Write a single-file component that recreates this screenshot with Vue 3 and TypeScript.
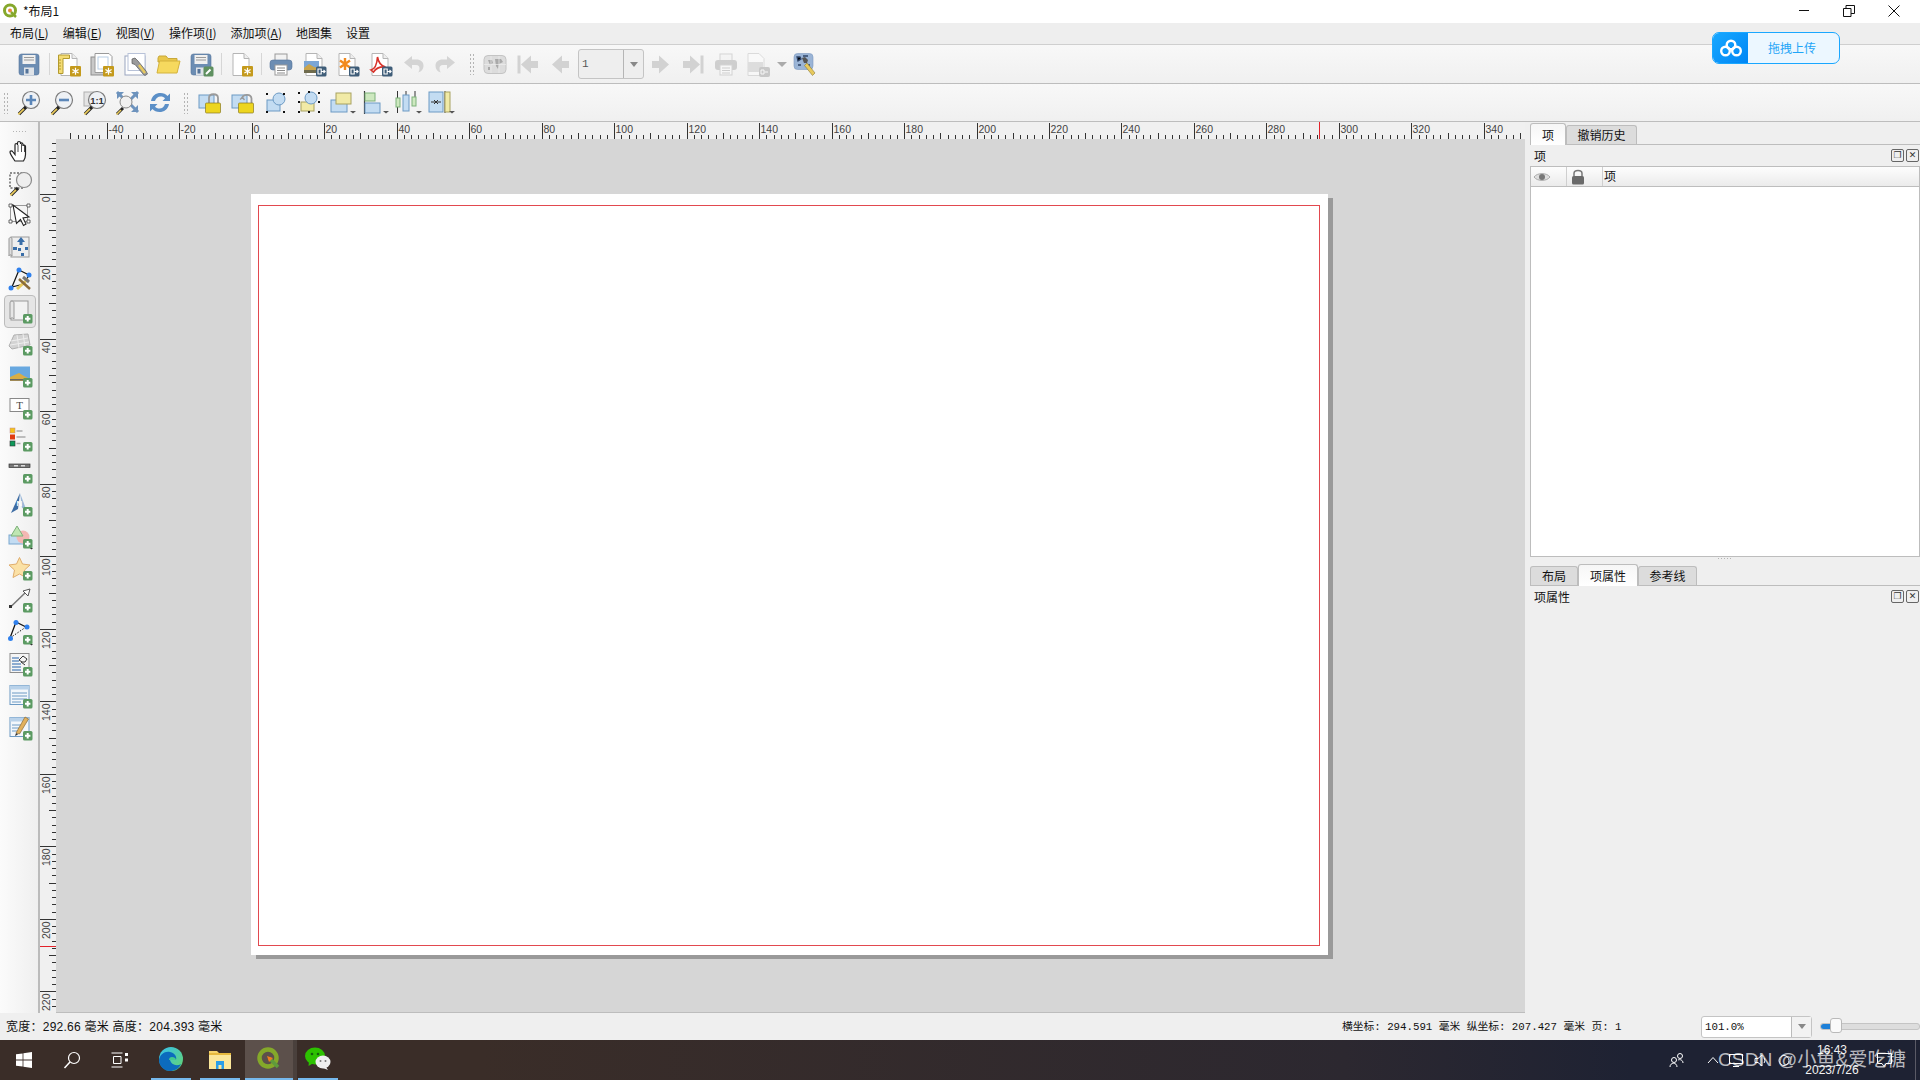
<script setup lang="ts">
type Item = { t: 'i' | 'sep' | 'handle' | 'combo' | 'drop' | 'spacer'; svg?: string; dis?: boolean; on?: boolean };

const plus = `<rect x="15" y="15" width="9.5" height="9.5" rx="1.5" fill="#5b9a62"/><path d="M19.7 17v5.4M17 19.7h5.4" stroke="#fff" stroke-width="2"/>`;
const star = `<rect x="13" y="14" width="11" height="10.5" rx="1" fill="#c49a1c"/><path d="M18.5 15.8v7M15.4 17.5l6.2 3.6M15.4 21.1l6.2-3.6" stroke="#fff" stroke-width="1.2"/>`;
const exp = `<rect x="14" y="14.5" width="10.5" height="10" rx="1.5" fill="#3f5d78"/><path d="M16 17h3.2v5H16zM19.5 19.5h3.5M21.5 18l1.6 1.5-1.6 1.5" fill="none" stroke="#fff" stroke-width="1.1"/>`;
const page = `<path d="M4 1.5h11l5 5v17H4z" fill="#fff" stroke="#b5b5b5"/><path d="M15 1.5v5h5" fill="#eee" stroke="#b5b5b5"/>`;
const lens = `<path d="M3 24l7-7" stroke="#222" stroke-width="3.2"/><path d="M2.4 24.4l5.6-5.6" stroke="#e8c95c" stroke-width="1.8"/>`;

const save = `<rect x="2" y="2" width="20" height="21" rx="2.5" fill="#6c8db3" stroke="#55749a" stroke-width=".6"/><rect x="5.5" y="3" width="13" height="9" fill="#f0f0f0"/><path d="M7 5.5h10M7 8h10" stroke="#9a9a9a"/><rect x="7" y="15.5" width="10" height="7.5" fill="#dfe3e8"/><rect x="8.5" y="17" width="3" height="4.5" fill="#55749a"/>`;
const I = {
  save,
  newLayout: `${page}<path d="M1.5 3h11v3.5H6v15H1.5z" fill="#f4dc74" stroke="#b39a2e"/><path d="M2 8h2M2 11h2M2 14h2M2 17h2" stroke="#b39a2e"/>${star}`,
  dup: `<rect x="1" y="5" width="17" height="18" fill="#c9c9c9" stroke="#8e8e8e"/><path d="M5 1.5h14l3 3v16H5z" fill="#fff" stroke="#9a9a9a"/><rect x="8" y="5" width="10" height="12" fill="#fff" stroke="#b8cde4"/>${star}`,
  mgr: `<rect x="2" y="4" width="20" height="19" fill="#fff" stroke="#9aa5bf"/><rect x="5" y="1.5" width="17" height="17" fill="#fff" stroke="#b8c2d8"/><path d="M9 7l3-1 3 3 8 10 1.5 3-2.5 1.5-2-1.5-8-9.5-3-1z" fill="#9b9b9b" stroke="#555" stroke-width=".7"/><path d="M16 13l6 8" stroke="#e8c95c" stroke-width="2.4"/>`,
  open: `<path d="M2 6l1-2h7l2 2.5h9V10H2z" fill="#e9c74a" stroke="#c8a83a"/><path d="M1 21l2.5-12H24l-3 12z" fill="#f6d95e" stroke="#d3b23c"/>`,
  saveAs: `${save}<rect x="14.5" y="14.5" width="10" height="10" rx="1.5" fill="#5f9060"/><path d="M17 22l4.5-4.5" stroke="#fff" stroke-width="2"/>`,
  newPage: `${page}${star}`,
  print: `<rect x="6" y="2" width="12" height="7" fill="#f2f2f2" stroke="#999"/><rect x="1" y="8" width="22" height="10" rx="3" fill="#6c8db3" stroke="#55749a" stroke-width=".6"/><rect x="6" y="13" width="12" height="10" fill="#fff" stroke="#999"/><path d="M8 16h8M8 18.5h8M8 21h8" stroke="#8b8b8b"/>`,
  img: `${page}<rect x="2" y="9" width="15" height="11" fill="#7ba6d6"/><path d="M2 16l5-4 5 3 5 1v4H2z" fill="#c9a44c"/><path d="M2 18h15v3H2z" fill="#6f6b4d"/>${exp}`,
  svg: `${page}<path d="M10 6v12M5 8.5l10 7M5 15.5l10-7" stroke="#f28a1e" stroke-width="2.4"/>${exp}`,
  pdf: `${page}<path d="M3 18c4-1 6-6 6.5-13 1 6 4 9 8 10-5-.5-9 .5-12 5z" fill="none" stroke="#d8322a" stroke-width="1.6"/>${exp}`,
  undo: `<path d="M11 4L3 10.5 11 17v-4h4c2.5 0 3.5 1.500 3.500 3.500 0 1.500-.5 3-1.500 4 4-1 5.500-4 5.500-7 0-3.500-3-6-7-6H11z" fill="#d4d4d4"/>`,
  redo: `<path d="M13 4l8 6.500-8 6.500v-4H9c-2.500 0-3.500 1.500-3.500 3.500 0 1.500.5 3 1.500 4-4-1-5.500-4-5.500-7 0-3.500 3-6 7-6h4.500z" fill="#d4d4d4"/>`,
  atlas: `<rect x="1" y="3.500" width="22" height="18" rx="4" fill="#dcdcdc" stroke="#c4c4c4"/><path d="M5 8h4l1 3-3 2zM12 7h6l2 3-4 2-1 5-2-3zM5 15h2v3H5z" fill="#a9a9a9"/><path d="M1 12.500h22M8 4v17M16 4v17" stroke="#eee" stroke-width=".7"/>`,
  first: `<path d="M3 3.500v18" stroke="#d2d2d2" stroke-width="3"/><path d="M5 12.500L15 3.500v5.500h7v7h-7v5.500z" fill="#d2d2d2"/>`,
  prev: `<path d="M3 12.500L13 3.500v5.500h7v7h-7v5.500z" fill="#d2d2d2"/>`,
  next: `<path d="M21 12.500L11 3.500v5.500H4v7h7v5.500z" fill="#d2d2d2"/>`,
  last: `<path d="M21 3.500v18" stroke="#d2d2d2" stroke-width="3"/><path d="M19 12.500L9 3.500v5.500H2v7h7v5.500z" fill="#d2d2d2"/>`,
  printD: `<g opacity=".35"><rect x="6" y="2" width="12" height="7" fill="#f2f2f2" stroke="#999"/><rect x="1" y="8" width="22" height="10" rx="3" fill="#8a8a8a"/><rect x="6" y="13" width="12" height="10" fill="#fff" stroke="#999"/><path d="M8 16h8M8 18.500h8M8 21h8" stroke="#8b8b8b"/></g>`,
  expD: `<g opacity=".4" transform="translate(-1 0)"><path d="M2 1.500h11l5 5v17H2z" fill="#fff" stroke="#b5b5b5"/><rect x="2" y="10" width="15" height="10" fill="#bdbdbd"/><rect x="13" y="15" width="11" height="10" rx="2" fill="#8a8a8a"/><path d="M15 18h3v4h-3zM18.500 20h3.500" fill="none" stroke="#fff"/></g>`,
  atlasSet: `<rect x="1" y="1.500" width="19" height="16" rx="3.500" fill="#9ab4d6" stroke="#7c98c0" stroke-width=".6"/><path d="M4 5h3l1 2-3 2zM10 4h5M5 13h3M14 13h3" stroke="#2f4468" stroke-width="1.300"/><path d="M9 6l3-1 3 3-1 3-3 0z" fill="#555"/><path d="M14 11l8 10-2.500 2.500-8-10z" fill="#e8c95c" stroke="#8a7a3a" stroke-width=".6"/>`,

  zoomIn: `<circle cx="15" cy="10" r="8.500" fill="#eef1f5" stroke="#7c7c7c" stroke-width="1.200"/><path d="M15 5v10M10 10h10" stroke="#5b86b8" stroke-width="2.600"/>${lens}`,
  zoomOut: `<circle cx="15" cy="10" r="8.500" fill="#eef1f5" stroke="#7c7c7c" stroke-width="1.200"/><path d="M10 10h10" stroke="#5b86b8" stroke-width="2.600"/>${lens}`,
  zoom1: `<rect x="2" y="2" width="14" height="14" fill="#e4e4e4" stroke="#b0b0b0"/><circle cx="15" cy="10" r="8.500" fill="#eef1f5" stroke="#7c7c7c" stroke-width="1.200"/><text x="15" y="13.500" text-anchor="middle" font-size="9.500" font-weight="700" font-family="Liberation Sans" fill="#333">1:1</text>${lens}`,
  zoomFull: `<path d="M2 2h7L2 9zM23 2h-7l7 7zM23 22h-7l7-7z" fill="#6d93bd"/><path d="M2 2l8 8M23 2l-8 8M23 22l-8-8" stroke="#6d93bd" stroke-width="3"/><circle cx="11" cy="12" r="6" fill="#f0f0f0" stroke="#8a8a8a"/><path d="M2 24l6-6" stroke="#222" stroke-width="3"/><path d="M1.500 24.500l4.500-4.500" stroke="#e8c95c" stroke-width="1.600"/>`,
  refresh: `<path d="M3 11C4 5.500 8 3 12.500 3c3 0 5.500 1 7 3L22 3.500V11h-7.500l2.500-2.500C16 7 14.500 6.500 12.500 6.500 10 6.500 8 8 7 11z" fill="#5b8fc7"/><path d="M21 14c-1 5.500-5 8-9.500 8-3 0-5.500-1-7-3L2 21.500V14h7.500L7 16.500C8 18 9.500 18.500 11.500 18.500c2.500 0 4.500-1.500 5.500-4.500z" fill="#5b8fc7"/>`,
  lock: `<rect x="1" y="5" width="15" height="13" fill="#c3dcf2" stroke="#6c9ac4"/><path d="M11 13V8c0-5 9-5 9 0v5" fill="none" stroke="#9a9a9a" stroke-width="1.800"/><rect x="7.500" y="13" width="15" height="10" rx="1" fill="#edd51f" stroke="#8a7a20" stroke-width=".7"/>`,
  unlock: `<rect x="1" y="5" width="15" height="13" fill="#c3dcf2" stroke="#6c9ac4"/><path d="M11 9c0-5 9-6 9.500-.5V13" fill="none" stroke="#9a9a9a" stroke-width="1.800"/><path d="M9 9.500l2.500-2 2 2.500" fill="none" stroke="#9a9a9a" stroke-width="1.300"/><rect x="7.500" y="13" width="15" height="10" rx="1" fill="#edd51f" stroke="#8a7a20" stroke-width=".7"/>`,
  group: `<rect x="3" y="10" width="13" height="11" fill="#c3dcf2" stroke="#6c9ac4"/><circle cx="15" cy="9" r="6" fill="#c3dcf2" stroke="#6c9ac4"/><path d="M2 3h2v2H2zM19 3h2v2h-2zM2 21h2v2H2zM19 21h2v2h-2z" fill="#111"/>`,
  ungroup: `<rect x="4" y="12" width="13" height="9" fill="#f1eaa6" stroke="#a8a260"/><circle cx="14" cy="8" r="6" fill="#c3dcf2" stroke="#6c9ac4"/><path d="M1 2h2v2H1zM11 1h2v2h-2zM21 2h2v2h-2zM1 11h2v2H1zM21 11h2v2h-2zM1 21h2v2H1zM11 21h2v2h-2zM21 21h2v2h-2z" fill="#111"/>`,
  raise: `<rect x="1" y="10" width="16" height="12" fill="#c3dcf2" stroke="#6c9ac4"/><rect x="6" y="3" width="15" height="11" fill="#f1eaa6" stroke="#a8a260"/><path d="M21 24h6l-3 2.500z" fill="#555" transform="translate(-1 -3)"/>`,
  align: `<path d="M1.500 1v23" stroke="#333" stroke-width="1.200"/><rect x="2" y="3" width="10" height="8" fill="#cde8bf" stroke="#7db17a"/><rect x="2" y="13" width="15" height="10" fill="#c3dcf2" stroke="#6c9ac4"/><path d="M21 24h6l-3 2.500z" fill="#555" transform="translate(-1 -3)"/>`,
  distrib: `<path d="M1.500 1v9M1.500 16v7M10 1v5M19 1v9" stroke="#333"/><rect x="0" y="8" width="4" height="9" fill="#cde8bf" stroke="#7db17a"/><rect x="7" y="5" width="6" height="16" fill="#c3dcf2" stroke="#6c9ac4"/><rect x="16" y="7" width="4" height="9" fill="#cde8bf" stroke="#7db17a"/><path d="M21 24h6l-3 2.500z" fill="#555" transform="translate(-1 -3)"/>`,
  resize: `<rect x="0" y="2" width="14" height="20" fill="#c3dcf2" stroke="#6c9ac4"/><path d="M2 12h4M12 12H8M5 10l2 2-2 2M9 10l-2 2 2 2" stroke="#333" fill="none"/><path d="M16 1v22" stroke="#333"/><rect x="16" y="2" width="5" height="20" fill="#f1eaa6" stroke="#a8a260"/><path d="M21 24h6l-3 2.500z" fill="#555" transform="translate(-1 -3)"/>`,

  hand: `<path d="M7 22c-2-3-5-7-5-9 0-1.500 2-1.500 3 0l2 2.500V6c0-2 2.500-2 2.500 0v-2c0-2 3-2 3 0V5c0-1.500 2.500-1.500 2.500.5V7c0-1.500 2.500-1 2.500 .5v8c0 3-1 5-2 6.500z" fill="#fff" stroke="#222" stroke-width="1.200"/><path d="M10 6v7M13.500 5v8M16.500 6v7" stroke="#222" stroke-width=".8"/>`,
  zoomTool: `<rect x="2" y="2" width="13" height="15" fill="none" stroke="#222" stroke-dasharray="2 1.500"/><circle cx="16" cy="9" r="7.500" fill="#eeeeee" stroke="#8a8a8a" stroke-width="1.200"/>${lens}`,
  select: `<rect x="2.500" y="2.500" width="17" height="16" fill="none" stroke="#999"/><path d="M1 1h3v3H1zM19 1h3v3h-3zM1 17h3v3H1zM19 17h3v3h-3z" fill="#fff" stroke="#444" stroke-width=".8"/><path d="M5 2l16 12-6 1 3 6-2.500 1.500-3-6-4 4z" fill="#fff" stroke="#222" stroke-width="1.100"/>`,
  moveC: `<rect x="3" y="2" width="18" height="20" fill="#eee" stroke="#999"/><path d="M1 4c0-2 3-2 3 0v17c-1-2-3-1-3 0z" fill="#ddd" stroke="#999"/><path d="M13 2l4 5h-2.500v3h-3V7H9z" fill="#3a6ea8"/><path d="M5 12h4v3H5zM10 13h3v3h-3zM17 12h3v3h-3zM13 18h3v3h-3z" fill="#3a6ea8"/>`,
  nodes: `<path d="M11 3L4 20l12-3L21 8z" fill="none" stroke="#111" stroke-width="1.200"/><circle cx="11" cy="3" r="2.500" fill="#2f80ed"/><circle cx="21" cy="8" r="2.500" fill="#2f80ed"/><circle cx="3" cy="21" r="2.500" fill="#2f80ed"/><path d="M9 22l11-10" stroke="#e8c95c" stroke-width="3"/><path d="M11 12l11 10" stroke="#8a6b3a" stroke-width="2.500"/><path d="M15 10l6 5" stroke="#777" stroke-width="3"/>`,
  map: `<rect x="3" y="2" width="17" height="19" fill="#f2f2f2" stroke="#999"/><path d="M2 4c0-2.500 4-2.500 4 0v16c-1-1.500-3-1.500-4 0z" fill="#e6e6e6" stroke="#999"/>${plus}`,
  d3: `<path d="M6 4l14-1 2 11-18 4-3-3z" fill="#d3d3d3" stroke="#b0b0b0"/><path d="M3 10l17-3M2 14l19-3M9 4l2 13M15 3l2 12" stroke="#eee"/>${plus}`,
  pic: `<g transform="translate(0 2)"><rect x="2" y="1.500" width="20" height="14" fill="#68a8e0"/><path d="M2 12l9-4 5 3 6 3v2H2z" fill="#d9ad46"/><rect x="2" y="14" width="20" height="1.500" fill="#666"/></g>${plus}`,
  label: `<g transform="translate(0 1.500)"><rect x="2" y="2" width="19" height="13" fill="#fff" stroke="#888"/><text x="11.500" y="12.500" text-anchor="middle" font-size="11" font-family="Liberation Serif" fill="#444">T</text></g>${plus}`,
  legend: `<rect x="2" y="1" width="5" height="5" fill="#f6c21c" stroke="#b88" stroke-width=".5"/><rect x="2" y="7.500" width="5" height="5" fill="#e03c12"/><rect x="2" y="14" width="5" height="5" fill="#0e9a5a" stroke="#333" stroke-width=".6"/><path d="M8.500 4h6M8.500 10h9M8.500 16.500h4" stroke="#aaa" stroke-width="1.400"/>${plus}`,
  scale: `<rect x="1" y="5" width="21" height="3.500" fill="#777" stroke="#333" stroke-width=".7"/><path d="M6 6.700h4M13 6.700h4" stroke="#ddd" stroke-width="1.500"/>${plus}`,
  north: `<path d="M12 1L3 21l7-4z" fill="#3e6da4"/><path d="M12 1l6 16-4-1z" fill="#9cb9d9"/><text x="11.500" y="14" text-anchor="middle" font-size="8" font-weight="700" font-family="Liberation Sans" fill="#fff">N</text>${plus}`,
  shape: `<rect x="1" y="11" width="15" height="9" fill="#c3dcf2" stroke="#7aa7cf"/><circle cx="15" cy="13" r="6.500" fill="#f3b7b3"/><path d="M9 2l6 10H3z" fill="#bfe6b2" stroke="#7db17a"/>${plus}<path d="M22 24h3l-1.500 1.500z" fill="#333"/>`,
  starI: `<path d="M11.500 1.500l3 6.500 7.500 1-5.500 5 1.500 7.500-6.500-3.500-6.500 3.500 1.500-7.500L1 9l7.500-1z" fill="#fbe1a6" stroke="#e0ad6c"/>${plus}`,
  arrow: `<path d="M2.500 19L17 5" stroke="#777" stroke-width="1.500"/><rect x="1" y="17" width="3" height="3" fill="#333"/><path d="M22 1l-2 7-5-5z" fill="#fff" stroke="#555"/>${plus}`,
  nodeAdd: `<path d="M8 2L2 18" stroke="#111" stroke-width="1.300"/><path d="M8 2l10 5" stroke="#111" stroke-width="1.300"/><path d="M2 18L18 7" stroke="#111" stroke-dasharray="1.500 1.500"/><circle cx="8" cy="2.500" r="2.500" fill="#2f80ed"/><circle cx="19" cy="7" r="2.500" fill="#2f80ed"/><circle cx="2.500" cy="18.500" r="2.500" fill="#2f80ed"/>${plus}<path d="M22 24h3l-1.500 1.500z" fill="#333"/>`,
  html: `<rect x="2" y="1.500" width="19" height="19" fill="#f5f5f5" stroke="#8c8c8c"/><path d="M4 6h7M4 9h7M4 12h9M4 15h9M4 18h9" stroke="#6c94c4" stroke-width="1.400"/><path d="M11 8l4-4 4 3-2 3h-3zM13 10l4 3" fill="none" stroke="#333"/>${plus}`,
  attr: `<rect x="2" y="1.500" width="19" height="19" fill="#f3f7fb" stroke="#6c9ac4"/><rect x="2" y="1.500" width="19" height="4" fill="#b9d2ea"/><path d="M4 9h15M4 12h15M4 15h15M4 18h9" stroke="#6c9ac4"/>${plus}`,
  fixed: `<rect x="2" y="1.500" width="19" height="19" fill="#f3f7fb" stroke="#6c9ac4"/><rect x="2" y="1.500" width="19" height="4" fill="#b9d2ea"/><path d="M4 9h9M4 12h9M4 15h9" stroke="#6c9ac4"/><path d="M8 17l9-16 3.500 2-9 15z" fill="#e2b15d" stroke="#8a6b3a" stroke-width=".7"/><path d="M8 17l-1 3 3-1.500z" fill="#333"/>${plus}`,
};

const bar1: Item[] = [
  { t: 'i', svg: I.save }, { t: 'sep' }, { t: 'i', svg: I.newLayout }, { t: 'i', svg: I.dup }, { t: 'i', svg: I.mgr },
  { t: 'i', svg: I.open }, { t: 'i', svg: I.saveAs }, { t: 'sep' }, { t: 'i', svg: I.newPage }, { t: 'sep' },
  { t: 'i', svg: I.print }, { t: 'i', svg: I.img }, { t: 'i', svg: I.svg }, { t: 'i', svg: I.pdf },
  { t: 'i', svg: I.undo }, { t: 'i', svg: I.redo }, { t: 'handle' },
  { t: 'i', svg: I.atlas }, { t: 'i', svg: I.first }, { t: 'i', svg: I.prev }, { t: 'combo' }, { t: 'i', svg: I.next },
  { t: 'i', svg: I.last }, { t: 'i', svg: I.printD }, { t: 'i', svg: I.expD }, { t: 'drop' }, { t: 'i', svg: I.atlasSet },
];
const bar2: Item[] = [
  { t: 'i', svg: I.zoomIn }, { t: 'i', svg: I.zoomOut }, { t: 'i', svg: I.zoom1 }, { t: 'i', svg: I.zoomFull }, { t: 'i', svg: I.refresh },
  { t: 'handle' },
  { t: 'i', svg: I.lock }, { t: 'i', svg: I.unlock }, { t: 'i', svg: I.group }, { t: 'i', svg: I.ungroup },
  { t: 'i', svg: I.raise }, { t: 'i', svg: I.align }, { t: 'i', svg: I.distrib }, { t: 'i', svg: I.resize },
];
const side: Item[] = [
  { t: 'i', svg: I.hand }, { t: 'i', svg: I.zoomTool }, { t: 'i', svg: I.select }, { t: 'i', svg: I.moveC }, { t: 'i', svg: I.nodes },
  { t: 'i', svg: I.map, on: true }, { t: 'i', svg: I.d3 }, { t: 'i', svg: I.pic }, { t: 'i', svg: I.label }, { t: 'i', svg: I.legend },
  { t: 'i', svg: I.scale }, { t: 'i', svg: I.north }, { t: 'i', svg: I.shape }, { t: 'i', svg: I.starI }, { t: 'i', svg: I.arrow },
  { t: 'i', svg: I.nodeAdd }, { t: 'i', svg: I.html }, { t: 'i', svg: I.attr }, { t: 'i', svg: I.fixed },
];

const menus = [
  { a: '布局(', k: 'L', b: ')' }, { a: '编辑(', k: 'E', b: ')' }, { a: '视图(', k: 'V', b: ')' },
  { a: '操作项(', k: 'I', b: ')' }, { a: '添加项(', k: 'A', b: ')' }, { a: '地图集', k: '', b: '' }, { a: '设置', k: '', b: '' },
];

const scale = 3.624;
const hx0 = 251.7 - 56;
const vy0 = 194 - 139;
const hw = 1525 - 56;
const vh = 1013 - 139;

function ticks(origin: number, size: number) {
  const out: { p: number; kind: number; label: string }[] = [];
  for (let mm = -50; mm <= 400; mm += 2) {
    const p = origin + mm * scale;
    if (p < 0 || p > size) continue;
    const kind = mm % 20 === 0 ? 2 : mm % 10 === 0 ? 1 : 0;
    out.push({ p: Math.round(p) + 0.5, kind, label: kind === 2 ? String(mm) : '' });
  }
  return out;
}
const hTicks = ticks(hx0, hw);
const vTicks = ticks(vy0, vh);
</script>

<template>
  <div class="app">
    <header class="title">
      <svg class="logo" viewBox="0 0 16 16">
        <circle cx="8" cy="7.500" r="5.500" fill="#fff" stroke="#86a82c" stroke-width="3" />
        <circle cx="8" cy="7.500" r="2" fill="#e88a3a" />
        <path d="M9 9l5 5" stroke="#86a82c" stroke-width="2.500" />
      </svg>
      <span>*布局1</span>
      <div class="winbtns">
        <svg width="12" height="12" viewBox="0 0 12 12"><path d="M1 5.500h10" stroke="#111" /></svg>
        <svg width="12" height="12" viewBox="0 0 12 12"><path d="M.5 3.500h7.500v8H.5zM3 3.500V.5h8.500v8H8" fill="none" stroke="#111" /></svg>
        <svg width="12" height="12" viewBox="0 0 12 12"><path d="M.5.5l11 11M11.500.5l-11 11" stroke="#111" /></svg>
      </div>
    </header>

    <nav class="menu">
      <span v-for="m in menus" :key="m.a" class="mi">{{ m.a }}<u v-if="m.k">{{ m.k }}</u>{{ m.b }}</span>
    </nav>

    <div class="tb first">
      <template v-for="(it, i) in bar1" :key="i">
        <span v-if="it.t === 'i'" class="tbtn"><svg class="ic" viewBox="0 0 25 25" v-html="it.svg"></svg></span>
        <span v-else-if="it.t === 'sep'" class="sep"></span>
        <span v-else-if="it.t === 'handle'" class="handle"></span>
        <span v-else-if="it.t === 'drop'" class="drop"></span>
        <span v-else class="combo"><span class="cv">1</span><span class="ca"><i></i></span></span>
      </template>
    </div>
    <div class="tb second">
      <span class="handle lead"></span>
      <template v-for="(it, i) in bar2" :key="i">
        <span v-if="it.t === 'i'" class="tbtn"><svg class="ic" viewBox="0 0 25 25" v-html="it.svg"></svg></span>
        <span v-else class="handle wide"></span>
      </template>
    </div>

    <main class="main">
      <aside class="side">
        <span class="hgrip"></span>
        <span v-for="(it, i) in side" :key="i" class="sbtn" :class="{ on: it.on }">
          <svg class="ic" viewBox="0 0 25 25" v-html="it.svg"></svg>
        </span>
      </aside>

      <section class="center">
        <div class="rtop">
          <div class="corner"></div>
          <svg class="hr" :width="hw" height="17">
            <g v-for="t in hTicks" :key="t.p">
              <line :x1="t.p" :x2="t.p" :y1="t.kind === 2 ? 1 : t.kind === 1 ? 11 : 13" y2="17" stroke="#333" />
              <text v-if="t.label" :x="t.p + 1" y="11" class="rl">{{ t.label }}</text>
            </g>
            <line x1="1263.500" x2="1263.500" y1="0" y2="17" stroke="#e3222a" />
          </svg>
        </div>
        <div class="rbody">
          <svg class="vr" width="16" :height="vh">
            <g v-for="t in vTicks" :key="t.p">
              <line :y1="t.p" :y2="t.p" :x1="t.kind === 2 ? 0 : t.kind === 1 ? 9 : 12" x2="16" stroke="#333" />
              <text v-if="t.label" x="0" y="0" class="rl" text-anchor="end" :transform="`translate(10 ${t.p + 2}) rotate(-90)`">{{ t.label }}</text>
            </g>
            <line x1="0" x2="16" y1="807.500" y2="807.500" stroke="#e3222a" />
          </svg>
          <div class="canvas">
            <div class="page"><div class="frame"></div></div>
          </div>
        </div>
      </section>

      <aside class="dock">
        <div class="tabs t1">
          <span class="tab on w36">项</span>
          <span class="tab w70">撤销历史</span>
        </div>
        <div class="dtitle"><span>项</span><span class="dbtns"><i class="db">❐</i><i class="db">✕</i></span></div>
        <div class="thead">
          <span class="th c1">
            <svg width="18" height="12" viewBox="0 0 18 12"><path d="M1 6c3-4.500 13-4.500 16 0-3 4.500-13 4.500-16 0z" fill="#ddd" stroke="#aaa" /><circle cx="9" cy="6" r="3" fill="#777" /></svg>
          </span>
          <span class="th c1 c2">
            <svg width="14" height="16" viewBox="0 0 14 16"><path d="M3 7V4.500c0-4 8-4 8 0V7" fill="none" stroke="#777" stroke-width="1.500" /><rect x="1" y="7" width="12" height="8.500" rx="1.500" fill="#6a6a6a" /></svg>
          </span>
          <span class="th c3">项</span>
        </div>
        <div class="list"></div>
        <div class="split"></div>
        <div class="tabs t2">
          <span class="tab w48">布局</span>
          <span class="tab on w60">项属性</span>
          <span class="tab w59">参考线</span>
        </div>
        <div class="dtitle"><span>项属性</span><span class="dbtns"><i class="db">❐</i><i class="db">✕</i></span></div>
      </aside>
    </main>

    <footer class="status">
      <span class="sleft">宽度：292.66 毫米 高度：204.393 毫米</span>
      <span class="sright">横坐标: 294.591 毫米 纵坐标: 207.427 毫米 页: 1</span>
      <span class="zoomc"><span class="zv">101.0%</span><span class="ca"><i></i></span></span>
      <span class="slider"><span class="fill"></span><span class="knob"></span></span>
    </footer>

    <div class="taskbar">
      <span class="tk">
        <svg width="16" height="16" viewBox="0 0 16 16"><path d="M0 2.300l6.600-.9v6.200H0zM7.400 1.300L16 0v7.600H7.400zM0 8.400h6.600v6.200L0 13.700zM7.400 8.400H16V16l-8.600-1.300z" fill="#fff" /></svg>
      </span>
      <span class="tk">
        <svg width="18" height="18" viewBox="0 0 18 18"><circle cx="11" cy="7" r="5.500" fill="none" stroke="#fff" stroke-width="1.200" /><path d="M7 11l-5.500 6" stroke="#fff" stroke-width="1.500" /></svg>
      </span>
      <span class="tk">
        <svg width="18" height="16" viewBox="0 0 18 16"><path d="M.5 1h11M.5 15h11M2.500 4.500h7.500v7H2.500z" fill="none" stroke="#fff" /><path d="M14 1h3v3h-3zM14 6.500h3v3h-3z" fill="#fff" /></svg>
      </span>
      <span class="app-ic edge">
        <svg width="26" height="26" viewBox="0 0 26 26">
          <defs><linearGradient id="eg" x1="0" x2="1" y1="0" y2="1"><stop offset="0" stop-color="#35c1f1" /><stop offset="1" stop-color="#66d56a" /></linearGradient></defs>
          <circle cx="13" cy="13" r="12" fill="url(#eg)" />
          <path d="M1 14c1-6 6-9 11-8 5 1 7 5 6 8h-6c1 4 6 7 11 4-2 5-7 7-11 7C6 25 1 20 1 14z" fill="#0c6bbd" />
          <path d="M11 14c0-2 1-3 3-3 2 0 4 1 4 3z" fill="#43c98e" />
        </svg>
      </span>
      <span class="app-ic files">
        <svg width="24" height="22" viewBox="0 0 24 22"><path d="M1 3h8l2 2h12v16H1z" fill="#f6d46b" /><rect x="1" y="5" width="22" height="16" fill="#fbe79a" /><path d="M1 5h22v2H1z" fill="#e6b93e" /><path d="M8 13h8v8h-2.500v-4h-3v4H8z" fill="#2b9fe8" /></svg>
      </span>
      <span class="app-ic qgis">
        <svg width="26" height="26" viewBox="0 0 26 26"><circle cx="12" cy="12" r="8.500" fill="none" stroke="#84a82a" stroke-width="4.500" /><path d="M13 12l9 9" stroke="#5f9a3c" stroke-width="3.500" /><path d="M11 10l6 2-4 4z" fill="#f07c1e" /></svg>
      </span>
      <span class="sliver"></span>
      <span class="app-ic wechat">
        <svg width="26" height="24" viewBox="0 0 26 24"><ellipse cx="10" cy="9" rx="10" ry="8.500" fill="#2dc100" /><path d="M4 14l-.5 5 5-3z" fill="#2dc100" /><circle cx="7" cy="7" r="1.300" fill="#14610a" /><circle cx="13" cy="7" r="1.300" fill="#14610a" /><ellipse cx="18" cy="15" rx="7.500" ry="6.500" fill="#eee" /><path d="M21 20l2 3-5-2z" fill="#eee" /><circle cx="15.500" cy="14" r="1" fill="#777" /><circle cx="20.500" cy="14" r="1" fill="#777" /></svg>
      </span>
      <span class="tray">
        <svg class="t-user" width="16" height="16" viewBox="0 0 16 16"><circle cx="11" cy="4" r="2.500" fill="none" stroke="#fff" /><circle cx="5" cy="8" r="2.500" fill="none" stroke="#fff" /><path d="M1 15c0-5 7-5 7 0M9 8c2-1 5 0 5 3" fill="none" stroke="#fff" /></svg>
        <svg class="t-caret" width="12" height="8" viewBox="0 0 12 8"><path d="M1 7l5-5.500L11 7" fill="none" stroke="#fff" /></svg>
        <svg class="t-net" width="14" height="13" viewBox="0 0 14 13"><rect x=".5" y=".5" width="13" height="9" fill="none" stroke="#fff" /><path d="M4 12.500h6" stroke="#fff" /></svg>
        <svg class="t-vol" width="14" height="13" viewBox="0 0 14 13"><path d="M1 4.500h3L8 1v11L4 8.500H1z" fill="none" stroke="#fff" /><path d="M10 4c1 1 1 4 0 5" fill="none" stroke="#fff" /></svg>
        <svg class="t-ime" width="12" height="13" viewBox="0 0 12 13"><circle cx="6" cy="6.500" r="5" fill="none" stroke="#fff" /></svg>
        <span class="clock"><span>16:43</span><span>2023/7/26</span></span>
        <svg class="t-note" width="15" height="14" viewBox="0 0 15 14"><path d="M.5.500h14v10H9l-2 3-2-3H.5z" fill="none" stroke="#fff" /></svg>
        <span class="showd"></span>
      </span>
      <span class="mark">CSDN @小鱼&amp;爱吃糖</span>
    </div>

    <div class="upload">
      <span class="ub">
        <svg width="22" height="18" viewBox="0 0 22 18"><circle cx="11" cy="6" r="4.300" fill="none" stroke="#fff" stroke-width="2.400" /><circle cx="5.500" cy="12" r="4.300" fill="none" stroke="#fff" stroke-width="2.400" /><circle cx="16.500" cy="12" r="4.300" fill="none" stroke="#fff" stroke-width="2.400" /></svg>
      </span>
      <span class="ut">拖拽上传</span>
    </div>
  </div>
</template>

<style scoped>
.app {
  position: relative;
  width: 1920px;
  height: 1080px;
  display: flex;
  flex-direction: column;
  overflow: hidden;
  background: #efefef;
  font-family: "Noto Sans CJK SC", "Liberation Sans", sans-serif;
  font-size: 12px;
  color: #111;
}
.title {
  height: 23px;
  box-sizing: border-box;
  padding-bottom: 2px;
  background: #fff;
  display: flex;
  align-items: center;
  font-size: 12px;
}
.logo { width: 16px; height: 16px; margin: 0 5px 0 2px; }
.winbtns { margin-left: auto; display: flex; gap: 33px; padding-right: 20px; align-items: center; }
.menu {
  height: 21px;
  box-sizing: border-box;
  padding: 0 0 2px 10px;
  background: #eee;
  display: flex;
  align-items: center;
  gap: 14px;
  font-size: 12px;
}
.mi { white-space: nowrap; line-height: 16px; }
.tb {
  display: flex;
  align-items: center;
  background: linear-gradient(#f8f8f8, #f0f0f0);
  border-top: 1px solid #cfcfcf;
}
.first { height: 38px; padding-left: 13px; }
.second { height: 37px; padding-left: 0; border-top: 1px solid #bdbdbd; }
.tbtn { width: 33px; height: 33px; display: flex; align-items: center; justify-content: center; flex: none; }
.ic { width: 25px; height: 25px; display: block; overflow: visible; }
.sep { width: 1px; height: 22px; background: #d6d6d6; margin: 0 3px; flex: none; }
.handle {
  width: 16px;
  height: 22px;
  flex: none;
  background-image: radial-gradient(circle, #b4b4b4 0.7px, transparent 0.8px);
  background-size: 3px 4px;
  background-repeat: repeat;
  background-clip: content-box;
  padding: 0 5px;
  box-sizing: border-box;
}
.wide { width: 17px; padding: 0 5px 0 6px; }
.lead { width: 12px; padding: 0 4px 0 2px; }
.combo {
  width: 66px;
  height: 30px;
  flex: none;
  box-sizing: border-box;
  border: 1px solid #c4c4c4;
  border-radius: 3px;
  display: flex;
  background: #eee;
}
.cv { flex: 1; border-right: 1px solid #b5b5b5; padding-left: 3px; line-height: 28px; color: #555; font-family: "Liberation Mono", monospace; font-size: 11px; }
.ca { width: 19px; display: flex; align-items: center; justify-content: center; }
.ca i { border: 4px solid transparent; border-top: 5px solid #888; margin-top: 4px; }
.drop { width: 10px; height: 9px; flex: none; margin: 5px 2px 0 1px; border: 5px solid transparent; border-top: 5px solid #aaa; border-bottom: none; box-sizing: border-box; }
.main { flex: 1; display: flex; min-height: 0; border-top: 1px solid #bdbdbd; }
.side {
  border-right: 2px solid #bbb;
  background: linear-gradient(90deg, #fbfbfb, #efefef);
  display: flex;
  flex-direction: column;
  align-items: center;
  padding: 8px 0 0 2px;
  flex: none;
  box-sizing: border-box;
  width: 40px;
}
.hgrip { width: 16px; height: 3px; margin-bottom: 2px; background-image: radial-gradient(circle, #b4b4b4 0.7px, transparent 0.8px); background-size: 3px 3px; }
.sbtn { width: 32px; height: 32.1px; display: flex; align-items: center; justify-content: center; flex: none; box-sizing: border-box; }
.sbtn.on { background: #e5e5e5; border: 1px solid #bcbcbc; border-radius: 4px; }
.center { width: 1485px; display: flex; flex-direction: column; flex: none; }
.rtop { display: flex; height: 17px; background: #f0f0f0; flex: none; }
.corner { width: 16px; flex: none; }
.hr, .vr { display: block; flex: none; }
.rl { font-family: "Liberation Sans", sans-serif; font-size: 10.500px; fill: #444; }
.rbody { flex: 1; display: flex; min-height: 0; }
.vr { background: #f0f0f0; }
.canvas {
  flex: 1;
  background: #d6d6d6;
  padding: 55px 0 0 195px;
  border-bottom: 1px solid #bdbdbd;
  box-sizing: border-box;
}
.page {
  width: 1077px;
  height: 761px;
  background: #fff;
  box-shadow: 5px 4px 0 #9a9a9a;
  padding: 11px 8px 9px 7px;
  box-sizing: border-box;
}
.frame { height: 100%; box-sizing: border-box; border: 1px solid #e2494f; }
.dock { flex: 1; padding-left: 5px; display: flex; flex-direction: column; min-width: 0; }
.tabs { display: flex; align-items: flex-end; border-bottom: 1px solid #bdbdbd; flex: none; }
.t1 { height: 22px; }
.t2 { height: 22px; }
.tab {
  height: 19px;
  padding-bottom: 1px;
  background: #dcdcdc;
  border: 1px solid #bdbdbd;
  border-bottom: none;
  border-radius: 3px 3px 0 0;
  box-sizing: border-box;
  display: flex;
  align-items: center;
  justify-content: center;
  font-size: 12px;
  flex: none;
}
.tab.on { height: 22px; background: linear-gradient(#f6f6f6, #fff); margin-bottom: -1px; }
.w36 { width: 36px; }
.w70 { width: 71px; }
.w48 { width: 48px; }
.w60 { width: 60px; }
.w59 { width: 59px; }
.dtitle { height: 21px; display: flex; align-items: center; justify-content: space-between; padding-left: 4px; font-size: 12px; flex: none; }
.dbtns { display: flex; gap: 2px; padding-right: 1px; }
.db {
  width: 11px;
  height: 11px;
  border: 1px solid #666;
  border-radius: 2px;
  font-style: normal;
  font-size: 9px;
  line-height: 11px;
  text-align: center;
  color: #333;
  font-family: "DejaVu Sans", sans-serif;
}
.thead {
  height: 21px;
  display: flex;
  flex: none;
  box-sizing: border-box;
  border: 1px solid #bdbdbd;
  background: linear-gradient(#fdfdfd, #ebebeb);
}
.th { display: flex; align-items: center; border-right: 1px solid #cfcfcf; }
.c1 { width: 36px; padding-left: 2px; box-sizing: border-box; }
.c2 { padding-left: 4px; }
.c3 { flex: 1; border-right: none; padding-left: 1px; padding-bottom: 3px; font-size: 12px; }
.list { height: 370px; background: #fff; border: 1px solid #bdbdbd; border-top: none; box-sizing: border-box; flex: none; }
.split {
  height: 6px;
  flex: none;
  margin: 0 auto;
  width: 16px;
  background-image: radial-gradient(circle, #b4b4b4 0.6px, transparent 0.7px);
  background-size: 3px 3px;
  background-repeat: repeat-x;
}
.status {
  height: 27px;
  background: #efefef;
  display: flex;
  align-items: center;
  flex: none;
}
.sleft { width: 1342px; padding: 0 0 2px 6px; box-sizing: border-box; font-size: 12px; letter-spacing: 0.25px; font-family: "Liberation Sans", "Noto Sans CJK SC", sans-serif; flex: none; }
.sright { width: 359px; padding-bottom: 2px; box-sizing: border-box; flex: none; font-family: "Liberation Mono", "Noto Sans CJK SC", monospace; font-size: 10.750px; white-space: nowrap; }
.zoomc {
  width: 111px;
  height: 22px;
  flex: none;
  box-sizing: border-box;
  background: #fff;
  border: 1px solid #c4c4c4;
  border-radius: 3px;
  display: flex;
}
.zv { flex: 1; border-right: 1px solid #bbb; padding-left: 3px; line-height: 20px; font-family: "Liberation Mono", monospace; font-size: 10.750px; }
.zoomc .ca { background: #f2f2f2; }
.slider { position: relative; width: 98px; height: 5px; margin-left: 8px; background: #ddd; border: 1px solid #c4c4c4; border-radius: 3px; flex: none; box-sizing: content-box; }
.fill { position: absolute; left: 0; top: 0; bottom: 0; width: 12px; background: #1e80d8; border-radius: 3px; }
.knob { position: absolute; left: 9px; top: -6px; width: 12px; height: 15px; box-sizing: border-box; background: #fafafa; border: 1px solid #b9b9b9; border-radius: 3px; }
.taskbar {
  position: relative;
  height: 40px;
  flex: none;
  background: linear-gradient(90deg, #3a2d28 0%, #3a2d28 25%, #2c2830 70%, #1e2233 85%, #1e2233 100%);
  display: flex;
  align-items: center;
  color: #fff;
}
.tk { width: 48px; display: flex; justify-content: center; flex: none; }
.app-ic { height: 40px; display: flex; align-items: center; justify-content: center; flex: none; box-sizing: border-box; border-bottom: 2px solid #76b9ed; }
.edge { width: 40px; margin-left: 7px; }
.files { width: 40px; margin-left: 9px; }
.qgis { width: 48px; margin-left: 5px; background: #5c504b; }
.sliver { width: 4px; height: 40px; background: #4a403c; flex: none; }
.wechat { width: 40px; margin-left: 1px; }
.tray { margin-left: auto; display: flex; align-items: center; height: 40px; font-family: "Liberation Sans", sans-serif; font-size: 12px; }
.t-user { margin-right: 22px; }
.t-caret { margin-right: 10px; }
.t-net { margin-right: 11px; }
.t-vol { margin-right: 10px; }
.t-ime { margin-right: 12px; }
.clock { display: flex; flex-direction: column; align-items: center; line-height: 20px; width: 60px; margin-right: 15px; color: #f2f2f2; }
.t-note { margin-right: 23px; }
.showd { width: 1px; height: 40px; background: #5a5a66; margin-right: 4px; }
.mark {
  position: absolute;
  left: 1718px;
  top: 5px;
  font-family: "Liberation Sans", "Noto Sans CJK SC", sans-serif;
  font-size: 19.200px;
  line-height: 30px;
  color: rgba(255, 255, 255, 0.7);
  white-space: nowrap;
}
.upload {
  position: absolute;
  left: 1712px;
  top: 32px;
  width: 128px;
  height: 32px;
  box-sizing: border-box;
  border: 1px solid #1aa7ff;
  border-radius: 7px;
  background: #ecf7ff;
  display: flex;
  overflow: hidden;
}
.ub { width: 35px; background: linear-gradient(135deg, #18a8ff, #0086f5); display: flex; align-items: center; justify-content: center; flex: none; }
.ut { flex: 1; display: flex; align-items: center; justify-content: center; padding: 0 3px 2px 0; color: #1fa5f7; font-size: 12px; }
</style>
